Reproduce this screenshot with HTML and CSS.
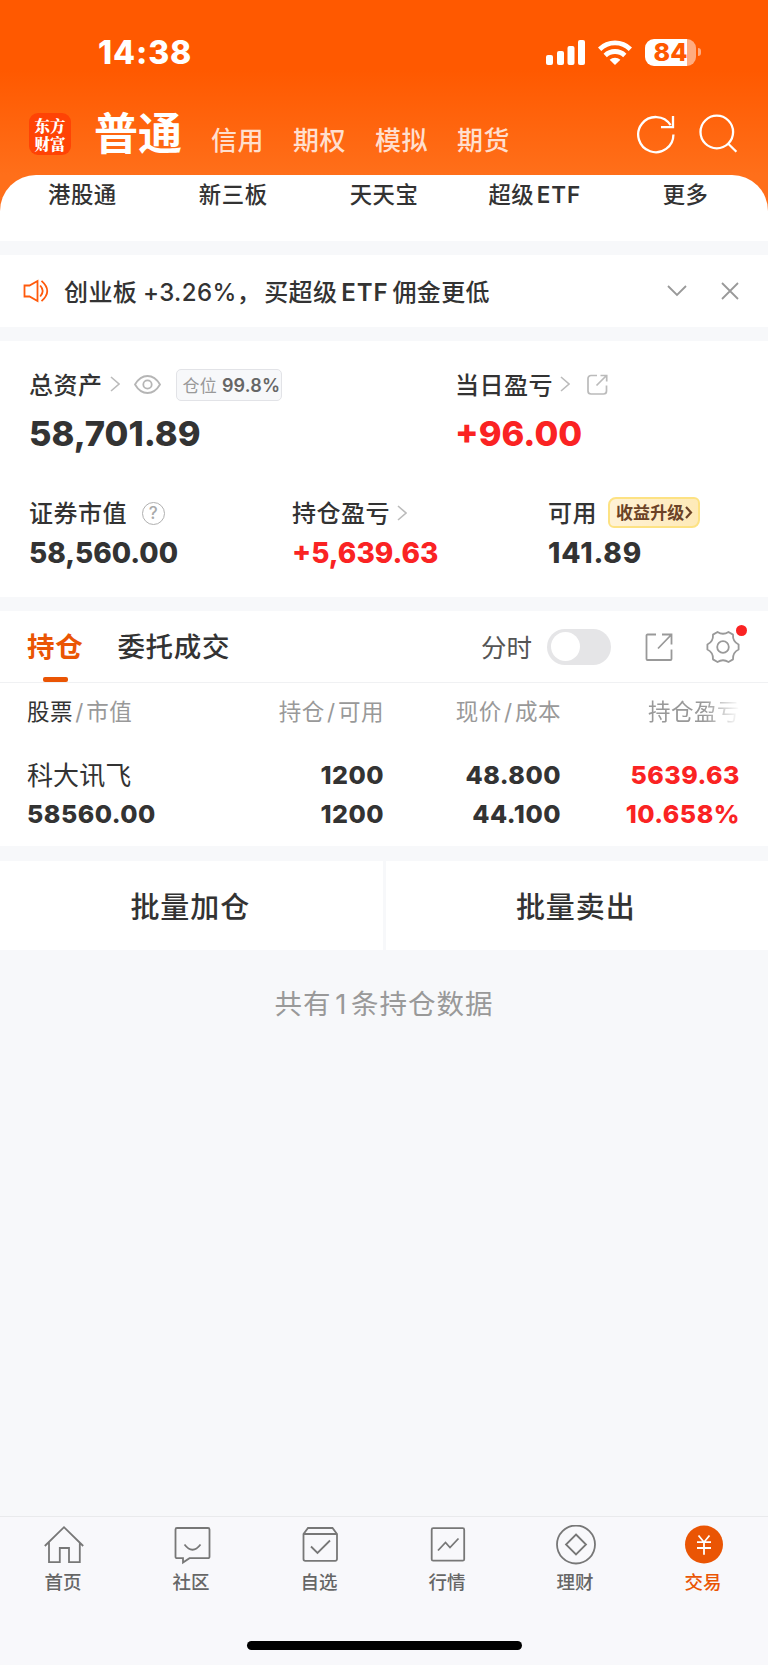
FILE: index.html
```html
<!DOCTYPE html>
<html lang="zh-CN">
<head>
  <meta charset="UTF-8">
  <meta name="viewport" content="width=device-width, initial-scale=1.0">
  <title>交易</title>
  <link rel="stylesheet" href="styles.css">
</head>
<body>
<div class="app">
  <header class="header">
    <div class="status-bar">
      <span class="time">14:38</span>
      <div class="status-icons">
        <svg class="signal" width="39" height="25" viewBox="0 0 39 25" fill="#fff">
          <rect x="0" y="15" width="7" height="10" rx="2"/>
          <rect x="11" y="11" width="7" height="14" rx="2"/>
          <rect x="21.5" y="6" width="7" height="19" rx="2"/>
          <rect x="32" y="0" width="7" height="25" rx="2"/>
        </svg>
        <svg class="wifi" width="34" height="25" viewBox="0 0 34 25">
          <g fill="none" stroke="#fff" stroke-width="4.8">
            <path d="M1.6 9.2a22 22 0 0 1 30.8 0"/>
            <path d="M7.2 15.4a14.2 14.2 0 0 1 19.6 0"/>
          </g>
          <path d="M17 25l-5.4-5.2a8 8 0 0 1 10.8 0z" fill="#fff"/>
        </svg>
        <div class="battery"><span>84</span></div>
        <div class="battery-nub"></div>
      </div>
    </div>
    <div class="account-bar">
      <div class="logo">东方<br>财富</div>
      <nav class="accounts">
        <a class="account active">普通</a>
        <a class="account">信用</a>
        <a class="account">期权</a>
        <a class="account">模拟</a>
        <a class="account">期货</a>
      </nav>
      <svg class="refresh" width="40" height="40" viewBox="0 0 40 40" fill="none" stroke="#fff" stroke-width="2.3">
        <path d="M37.4 20.5A17.6 17.6 0 1 1 34.6 11.1"/>
        <path d="M37 2v11.2H25"/>
      </svg>
      <svg class="search" width="40" height="40" viewBox="0 0 40 40" fill="none" stroke="#fff" stroke-width="2.3">
        <circle cx="18.8" cy="18" r="16.3"/>
        <path d="M30 29.5l8.4 8.2"/>
      </svg>
    </div>
  </header>

  <nav class="menu">
    <a>港股通</a><a>新三板</a><a>天天宝</a><a>超级 <span class="latin">ETF</span></a><a>更多</a>
  </nav>

  <div class="notice">
    <svg width="26" height="24" viewBox="0 0 26 24" fill="none" stroke="#ff5a0c" stroke-width="1.8">
      <path d="M1.5 6.5h5L14.5 2v20l-8-4.5h-5z"/>
      <path d="M17.2 6.5q5 5.5 0 11M18.5 1.800q11.500 10.200 0 20.400"/>
    </svg>
    <span class="notice-text">创业板 <span class="rate">+3.26%，</span>买超级 <span class="latin">ETF</span> 佣金更低</span>
    <svg class="notice-more" width="20" height="12" viewBox="0 0 20 12" fill="none" stroke="#999" stroke-width="1.8"><path d="M1 1l9 9 9-9"/></svg>
    <svg width="18" height="18" viewBox="0 0 18 18" fill="none" stroke="#999" stroke-width="1.8"><path d="M1 1l16 16M17 1L1 17"/></svg>
  </div>

  <section class="summary">
    <div class="summary-row top">
      <div class="item">
        <div class="label">
          <span class="text">总资产</span>
          <svg class="arrow" width="10" height="16" viewBox="0 0 10 16"><path d="M1 1l8 7-8 7"/></svg>
          <svg class="eye" width="27" height="19" viewBox="0 0 27 19" fill="none" stroke="#b5b5b5" stroke-width="1.8">
            <path d="M1 9.5Q6 1 13.5 1T26 9.5Q21 18 13.5 18T1 9.5z"/>
            <circle cx="13.5" cy="9.5" r="4.2"/>
          </svg>
          <span class="tag">仓位 <b>99.8%</b></span>
        </div>
        <div class="value">58,701.89</div>
      </div>
      <div class="item">
        <div class="label">
          <span class="text">当日盈亏</span>
          <svg class="arrow" width="10" height="16" viewBox="0 0 10 16"><path d="M1 1l8 7-8 7"/></svg>
          <svg class="share" width="21" height="21" viewBox="0 0 21 21" fill="none" stroke="#bbb" stroke-width="1.7">
            <path d="M10 1.5H4a3 3 0 0 0-3 3V17a3 3 0 0 0 3 3h12.5a3 3 0 0 0 3-3v-5.5"/>
            <path d="M13.5 1.500h6.200v6M19.500 1.500l-10 10"/>
          </svg>
        </div>
        <div class="value red">+96.00</div>
      </div>
    </div>
    <div class="summary-row bottom">
      <div class="item">
        <div class="label">
          <span class="text">证券市值</span>
          <span class="help">?</span>
        </div>
        <div class="value">58,560.00</div>
      </div>
      <div class="item">
        <div class="label">
          <span class="text">持仓盈亏</span>
          <svg class="arrow" width="10" height="16" viewBox="0 0 10 16"><path d="M1 1l8 7-8 7"/></svg>
        </div>
        <div class="value red">+5,639.63</div>
      </div>
      <div class="item">
        <div class="label">
          <span class="text">可用</span>
          <span class="upgrade"><span>收益升级</span><svg width="8" height="13" viewBox="0 0 8 13" fill="none" stroke="#6b4226" stroke-width="2.2"><path d="M1 1l5 5.5L1 12"/></svg></span>
        </div>
        <div class="value available">141.89</div>
      </div>
    </div>
  </section>

  <section class="holdings">
    <div class="tabs">
      <a class="tab active">持仓</a>
      <a class="tab">委托成交</a>
      <span class="minute">分时</span>
      <span class="toggle"></span>
      <svg class="export" width="28" height="28" viewBox="0 0 28 28" fill="none" stroke="#999" stroke-width="1.8">
        <path d="M11 1.500H2.500a1 1 0 0 0-1 1v23.500a1 1 0 0 0 1 1h23a1 1 0 0 0 1-1V16.500"/>
        <path d="M17 1.500h9.500v10M26.500 1.500L13 15.500"/>
      </svg>
      <span class="settings">
        <svg width="34" height="34" viewBox="0 0 34 34" fill="none" stroke="#999" stroke-width="1.8" stroke-linejoin="round">
          <path d="M11.500 2Q17 5.500 22.500 2L27 4.600Q26.500 11.500 32.600 14.500V19.500Q26.500 22.500 27 29.400L22.500 32Q17 28.500 11.500 32L7 29.400Q7.500 22.500 1.400 19.500V14.500Q7.500 11.500 7 4.600z"/>
          <circle cx="17" cy="17" r="5.800"/>
        </svg>
      </span>
    </div>
    <div class="table">
      <div class="row head">
        <span><em>股票</em> / 市值</span>
        <span>持仓 / 可用</span>
        <span>现价 / 成本</span>
        <span class="fade">持仓盈亏</span>
      </div>
      <div class="row">
        <span class="name">科大讯飞</span>
        <span>1200</span>
        <span>48.800</span>
        <span class="red">5639.63</span>
      </div>
      <div class="row">
        <span>58560.00</span>
        <span>1200</span>
        <span>44.100</span>
        <span class="red">10.658%</span>
      </div>
    </div>
  </section>

  <div class="batch">
    <button>批量加仓</button>
    <button>批量卖出</button>
  </div>
  <p class="count">共有 1 条持仓数据</p>

  <footer class="footer">
    <nav class="tabbar">
      <a>
        <svg width="40" height="40" viewBox="0 0 40 40">
          <path d="M.8 21L20 2.200 39.200 21M5 17.500V37.200h10.800V23H25v14.200h10.800V17.500"/>
        </svg>
        <span>首页</span>
      </a>
      <a>
        <svg width="40" height="40" viewBox="0 0 40 40">
          <path d="M5 3h31a1.500 1.500 0 0 1 1.500 1.500V31.700a1.500 1.500 0 0 1-1.500 1.500H17.500L11 37.500V33.200H5a1.500 1.500 0 0 1-1.500-1.500V4.500A1.500 1.500 0 0 1 5 3z"/>
          <path d="M12.500 19.500q8 10.500 16 0"/>
        </svg>
        <span>社区</span>
      </a>
      <a>
        <svg width="40" height="40" viewBox="0 0 40 40">
          <path d="M3.500 9L8 3h24.500L37 9v25a1.800 1.800 0 0 1-1.800 1.800H5.300A1.800 1.800 0 0 1 3.500 34zM3.500 9H37"/>
          <path d="M11 21.500l6.500 6.500 12.500-12.500"/>
        </svg>
        <span>自选</span>
      </a>
      <a>
        <svg width="40" height="40" viewBox="0 0 40 40">
          <rect x="3.700" y="3.200" width="32.500" height="32.500" rx="1.500"/>
          <path d="M10 25.500l7.500-8 4.500 5 8.500-9"/>
        </svg>
        <span>行情</span>
      </a>
      <a>
        <svg width="40" height="40" viewBox="0 0 40 40">
          <circle cx="20" cy="19.500" r="19"/>
          <path d="M20 9.500l10 10-10 10-10-10z"/>
        </svg>
        <span>理财</span>
      </a>
      <a class="active">
        <svg width="40" height="40" viewBox="0 0 40 40">
          <circle class="disc" cx="20" cy="19.500" r="19"/>
          <path class="yen" d="M14.500 10.500L20 17.200l5.500-6.700M20 17.200v12.500M13 17.200h14M13 23h14"/>
        </svg>
        <span>交易</span>
      </a>
    </nav>
    <div class="home-indicator"></div>
  </footer>
</div>
</body>
</html>
```

FILE: styles.css
```css
* {
  box-sizing: border-box;
}
body {
  margin: 0;
  background: #f7f8fa;
  font-family: Inter, "Noto Sans CJK SC", sans-serif;
  color: #333;
}
svg {
  display: block;
  flex: none;
}
.app {
  display: flex;
  flex-direction: column;
  width: 768px;
  height: 1665px;
  overflow: hidden;
}
.red {
  color: #fa2323;
}
.latin {
  font-weight: 600;
  letter-spacing: 1px;
}

/* header */
.header {
  height: 215px;
  margin-bottom: -40px;
  background: linear-gradient(#ff5900 0, #ff5900 70px, #ff6f1a 175px, #ff6f1a 100%);
  color: #fff;
}
.status-bar {
  display: flex;
  align-items: center;
  justify-content: space-between;
  height: 104px;
  padding: 0 67px 0 98px;
}
.time {
  font-size: 32px;
  font-weight: 800;
  letter-spacing: 0.9px;
}
.status-icons {
  display: flex;
  align-items: center;
}
.wifi {
  margin: 0 13px;
}
.battery {
  display: flex;
  align-items: center;
  justify-content: center;
  width: 51px;
  height: 27px;
  border-radius: 9px;
  background: linear-gradient(90deg, #fff 42px, #ffac80 42px);
  color: #ff5900;
  font-size: 25px;
  font-weight: 800;
}
.battery-nub {
  width: 3px;
  height: 8px;
  margin-left: 2px;
  border-radius: 0 3px 3px 0;
  background: #ffac80;
}
.account-bar {
  display: flex;
  align-items: center;
  height: 60px;
  padding: 0 30px 0 29px;
}
.logo {
  width: 42px;
  height: 42px;
  padding-top: 3px;
  border-radius: 9px;
  background: #ff4305;
  font-family: "Noto Serif CJK SC", "Noto Sans CJK SC", serif;
  font-size: 15.5px;
  font-weight: 900;
  line-height: 18px;
  text-align: center;
}
.accounts {
  display: flex;
  align-items: baseline;
  gap: 29px;
  margin-left: 23px;
  padding-top: 6px;
}
.account {
  color: #ffdfce;
  font-size: 26px;
  font-weight: 500;
  line-height: 60px;
  letter-spacing: 0.5px;
}
.account.active {
  color: #fff;
  font-size: 44px;
  font-weight: 700;
  letter-spacing: 0;
}
.refresh {
  margin-left: auto;
}
.search {
  margin-left: 22px;
}

/* quick menu */
.menu {
  display: grid;
  grid-template-columns: repeat(5, 1fr);
  height: 66px;
  padding: 0 7px;
  border-radius: 36px 36px 0 0;
  background: #fff;
  font-size: 22.4px;
  font-weight: 500;
  letter-spacing: 0.5px;
  line-height: 39px;
  text-align: center;
  word-spacing: -4px;
}

/* notice */
.notice {
  display: flex;
  align-items: center;
  height: 72px;
  margin: 14px 0;
  padding: 0 29px 0 23px;
  background: #fff;
}
.notice-text {
  margin-left: 15px;
  padding-bottom: 2px;
  font-size: 24px;
  font-weight: 500;
  letter-spacing: 0.4px;
  word-spacing: -3px;
}
.rate {
  margin: 0 3px 0 2px;
}
.notice-more {
  margin: 0 34px 0 auto;
}

/* assets */
.summary {
  height: 256px;
  padding: 24px 30px 0 29px;
  background: #fff;
}
.summary-row {
  display: grid;
}
.top {
  grid-template-columns: 426px 1fr;
  height: 128px;
}
.bottom {
  grid-template-columns: 263px 256px 1fr;
}
.label {
  display: flex;
  align-items: center;
  height: 40px;
  font-size: 24px;
  font-weight: 500;
  letter-spacing: 0.5px;
  white-space: nowrap;
}
.text {
  padding-bottom: 4px;
}
.arrow {
  margin-left: 7px;
  fill: none;
  stroke: #bbb;
  stroke-width: 1.6;
}
.top .arrow,
.eye,
.share {
  margin-bottom: 2px;
}
.eye {
  margin-left: 14px;
}
.share {
  margin-left: 17px;
}
.tag {
  height: 32px;
  margin-left: 15px;
  padding: 0 1px 0 6px;
  border: 1px solid #e2e3e7;
  border-radius: 5px;
  background: #f7f8fa;
  color: #999;
  font-size: 17px;
  font-weight: 400;
  line-height: 31px;
  letter-spacing: 0.2px;
}
.tag b {
  color: #666;
  font-size: 18px;
  font-weight: 600;
}
.help {
  width: 23px;
  height: 23px;
  margin-left: 15px;
  border: 1.6px solid #b0b0b0;
  border-radius: 50%;
  color: #aaa;
  font-size: 17px;
  line-height: 20px;
  text-align: center;
}
.upgrade {
  display: flex;
  align-items: center;
  height: 31px;
  margin: -2px 0 0 11px;
  padding: 0 5px 0 6px;
  border: 2px solid #fde283;
  border-radius: 8px 6px 8px 6px;
  background: linear-gradient(90deg, #fff2d6, #feeab8);
  color: #6b4226;
  font-size: 17px;
  font-weight: 700;
  letter-spacing: 0.1px;
}
.upgrade span {
  padding-bottom: 2px;
}
.upgrade svg {
  margin-left: 1px;
}
.value {
  font-size: 28px;
  font-weight: 800;
  line-height: 40px;
}
.available {
  letter-spacing: 0.9px;
}
.top .value {
  font-size: 34.5px;
  line-height: 57px;
}

/* holdings */
.holdings {
  height: 235px;
  margin-top: 14px;
  background: #fff;
}
.tabs {
  display: flex;
  align-items: center;
  height: 72px;
  padding: 0 28px 0 27px;
  border-bottom: 1px solid #f0f1f3;
}
.tab {
  position: relative;
  margin-right: 34px;
  padding-bottom: 3px;
  font-size: 27.5px;
  font-weight: 500;
  letter-spacing: 0.7px;
}
.tab.active {
  color: #ea5504;
  font-weight: 700;
}
.tab.active::after {
  content: "";
  position: absolute;
  bottom: -14px;
  left: 16px;
  width: 25px;
  height: 5px;
  border-radius: 2px;
  background: #ea5504;
}
.minute {
  margin-left: auto;
  padding-bottom: 2px;
  color: #555;
  font-size: 25.5px;
}
.toggle {
  width: 64px;
  height: 36px;
  margin: 0 34px 0 15px;
  padding: 3.5px;
  border-radius: 18px;
  background: #e5e5e7;
}
.toggle::before {
  content: "";
  display: block;
  width: 29px;
  height: 29px;
  border-radius: 50%;
  background: #fff;
}
.settings {
  position: relative;
  margin-left: 33px;
}
.settings::after {
  content: "";
  position: absolute;
  top: -5px;
  right: -7px;
  width: 11px;
  height: 11px;
  border-radius: 50%;
  background: #fa2323;
}
.table {
  padding: 9px 28px 0 27px;
}
.row {
  display: grid;
  grid-template-columns: 178px 179px 177px 1fr;
  height: 39px;
  font-size: 25px;
  font-weight: 800;
  line-height: 39px;
  letter-spacing: 0.5px;
  text-align: right;
}
.row span:first-child {
  text-align: left;
}
.head {
  height: 64px;
  color: #999;
  font-size: 22.5px;
  font-weight: 400;
  word-spacing: -4.5px;
}
.head em {
  color: #333;
  font-style: normal;
}
.fade {
  -webkit-mask-image: linear-gradient(90deg, #000 80%, transparent);
  mask-image: linear-gradient(90deg, #000 80%, transparent);
}
.row .name {
  font-size: 26px;
  font-weight: 400;
  letter-spacing: 0.1px;
}

/* batch actions */
.batch {
  display: flex;
  gap: 3px;
  height: 89px;
  margin-top: 15px;
}
button {
  flex: 1;
  padding: 0 2px 2px 0;
  border: none;
  background: #fff;
  color: #333;
  font: 500 29px Inter, "Noto Sans CJK SC", sans-serif;
  letter-spacing: 0.9px;
}
.count {
  margin: 34px 0 0;
  color: #999;
  font-size: 27.5px;
  line-height: 40px;
  letter-spacing: 1px;
  word-spacing: -5px;
  text-align: center;
}

/* bottom bar */
.footer {
  height: 149px;
  margin-top: auto;
  border-top: 1px solid #e9eaec;
  background: #f8f8fb;
}
.tabbar {
  display: grid;
  grid-template-columns: repeat(6, 1fr);
  height: 124px;
  padding-top: 8px;
}
.tabbar a {
  display: flex;
  flex-direction: column;
  align-items: center;
  color: #666;
  font-size: 18.5px;
  font-weight: 500;
  line-height: 34px;
}
.tabbar span {
  padding-right: 2px;
}
.tabbar svg {
  fill: none;
  stroke: #777;
  stroke-width: 1.8;
}
.tabbar .active {
  color: #ea5504;
}
.tabbar .disc {
  fill: #ea5504;
  stroke: none;
}
.tabbar .yen {
  stroke: #fff;
}
.home-indicator {
  width: 275px;
  height: 9px;
  margin: 0 auto;
  border-radius: 5px;
  background: #000;
}
```
